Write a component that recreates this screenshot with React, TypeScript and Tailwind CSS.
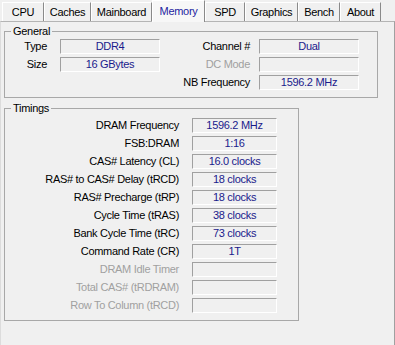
const tabs = [
  { label: "CPU", w: "w-[42px]" },
  { label: "Caches", w: "w-[47px]" },
  { label: "Mainboard", w: "w-[61px]" },
  { label: "Memory", w: "w-[53px]", active: true },
  { label: "SPD", w: "w-[40px]" },
  { label: "Graphics", w: "w-[53px]" },
  { label: "Bench", w: "w-[42px]" },
  { label: "About", w: "w-[41px]" },
];

const timings = [
  { label: "DRAM Frequency", value: "1596.2 MHz" },
  { label: "FSB:DRAM", value: "1:16" },
  { label: "CAS# Latency (CL)", value: "16.0 clocks" },
  { label: "RAS# to CAS# Delay (tRCD)", value: "18 clocks" },
  { label: "RAS# Precharge (tRP)", value: "18 clocks" },
  { label: "Cycle Time (tRAS)", value: "38 clocks" },
  { label: "Bank Cycle Time (tRC)", value: "73 clocks" },
  { label: "Command Rate (CR)", value: "1T" },
  { label: "DRAM Idle Timer", value: "", disabled: true },
  { label: "Total CAS# (tRDRAM)", value: "", disabled: true },
  { label: "Row To Column (tRCD)", value: "", disabled: true },
];

function Field({ value, width }: { value: string; width: string }) {
  return (
    <div
      className={`h-[15px] ${width} border border-[#a0a0a0] border-b-white border-r-white bg-[#f0f0f0] text-center leading-[13px] text-[#1a1a8c]`}
    >
      {value}
    </div>
  );
}

function Label({ text, width, disabled }: { text: string; width: string; disabled?: boolean }) {
  return (
    <div
      className={`${width} text-right leading-[15px] ${disabled ? "text-[#a0a0a0]" : "text-black"}`}
    >
      {text}
    </div>
  );
}

export default function App() {
  return (
    <div className="h-[345px] w-[395px] overflow-hidden bg-[#f0f0f0] font-['Liberation_Sans',Arial,sans-serif] text-[11px] tracking-[-0.3px] text-black">
      {/* tab strip */}
      <div className="flex h-[21px] items-end pl-[2px]">
        {tabs.map((t) =>
          t.active ? (
            <div
              key={t.label}
              className={`relative z-10 -mb-px flex h-[22px] ${t.w} items-center justify-center border-l border-r border-t border-l-white border-r-[#8a8a8a] border-t-white bg-[#f7f7f7] pb-[1px] text-[#2424a0]`}
            >
              {t.label}
            </div>
          ) : (
            <div
              key={t.label}
              className={`flex h-[19px] ${t.w} items-center justify-center border-l border-r border-t border-l-white border-r-[#8a8a8a] border-t-white pt-[1px]`}
            >
              {t.label}
            </div>
          )
        )}
      </div>

      {/* tab page */}
      <div className="h-[330px] border-l border-r border-t border-l-[#dcdcdc] border-r-[#a0a0a0] border-t-[#b4b4b4] bg-[#f0f0f0] pl-[3px] pt-[2px]">
        <fieldset className="w-[374px] border border-[#a8a8a8] px-0 pb-[7px]">
          <legend className="ml-[6px] px-[2px] leading-[14px]">General</legend>
          <div className="flex flex-col gap-[3px] pt-[1px]">
            <div className="flex">
              <Label text="Type" width="w-[42px]" />
              <div className="ml-[13px]">
                <Field value="DDR4" width="w-[100px]" />
              </div>
              <Label text="Channel #" width="w-[90px]" />
              <div className="ml-[9px]">
                <Field value="Dual" width="w-[100px]" />
              </div>
            </div>
            <div className="flex">
              <Label text="Size" width="w-[42px]" />
              <div className="ml-[13px]">
                <Field value="16 GBytes" width="w-[100px]" />
              </div>
              <Label text="DC Mode" width="w-[90px]" disabled />
              <div className="ml-[9px]">
                <Field value="" width="w-[100px]" />
              </div>
            </div>
            <div className="flex">
              <div className="w-[155px]" />
              <Label text="NB Frequency" width="w-[90px]" />
              <div className="ml-[9px]">
                <Field value="1596.2 MHz" width="w-[100px]" />
              </div>
            </div>
          </div>
        </fieldset>

        <fieldset className="mt-[3px] w-[295px] border border-[#a8a8a8] px-0 pb-[7px]">
          <legend className="ml-[6px] px-[2px] leading-[14px]">Timings</legend>
          <div className="flex flex-col gap-[3px] pt-[3px]">
            {timings.map((r) => (
              <div key={r.label} className="flex">
                <Label text={r.label} width="w-[174px]" disabled={r.disabled} />
                <div className="ml-[13px]">
                  <Field value={r.value} width="w-[85px]" />
                </div>
              </div>
            ))}
          </div>
        </fieldset>
      </div>
    </div>
  );
}
